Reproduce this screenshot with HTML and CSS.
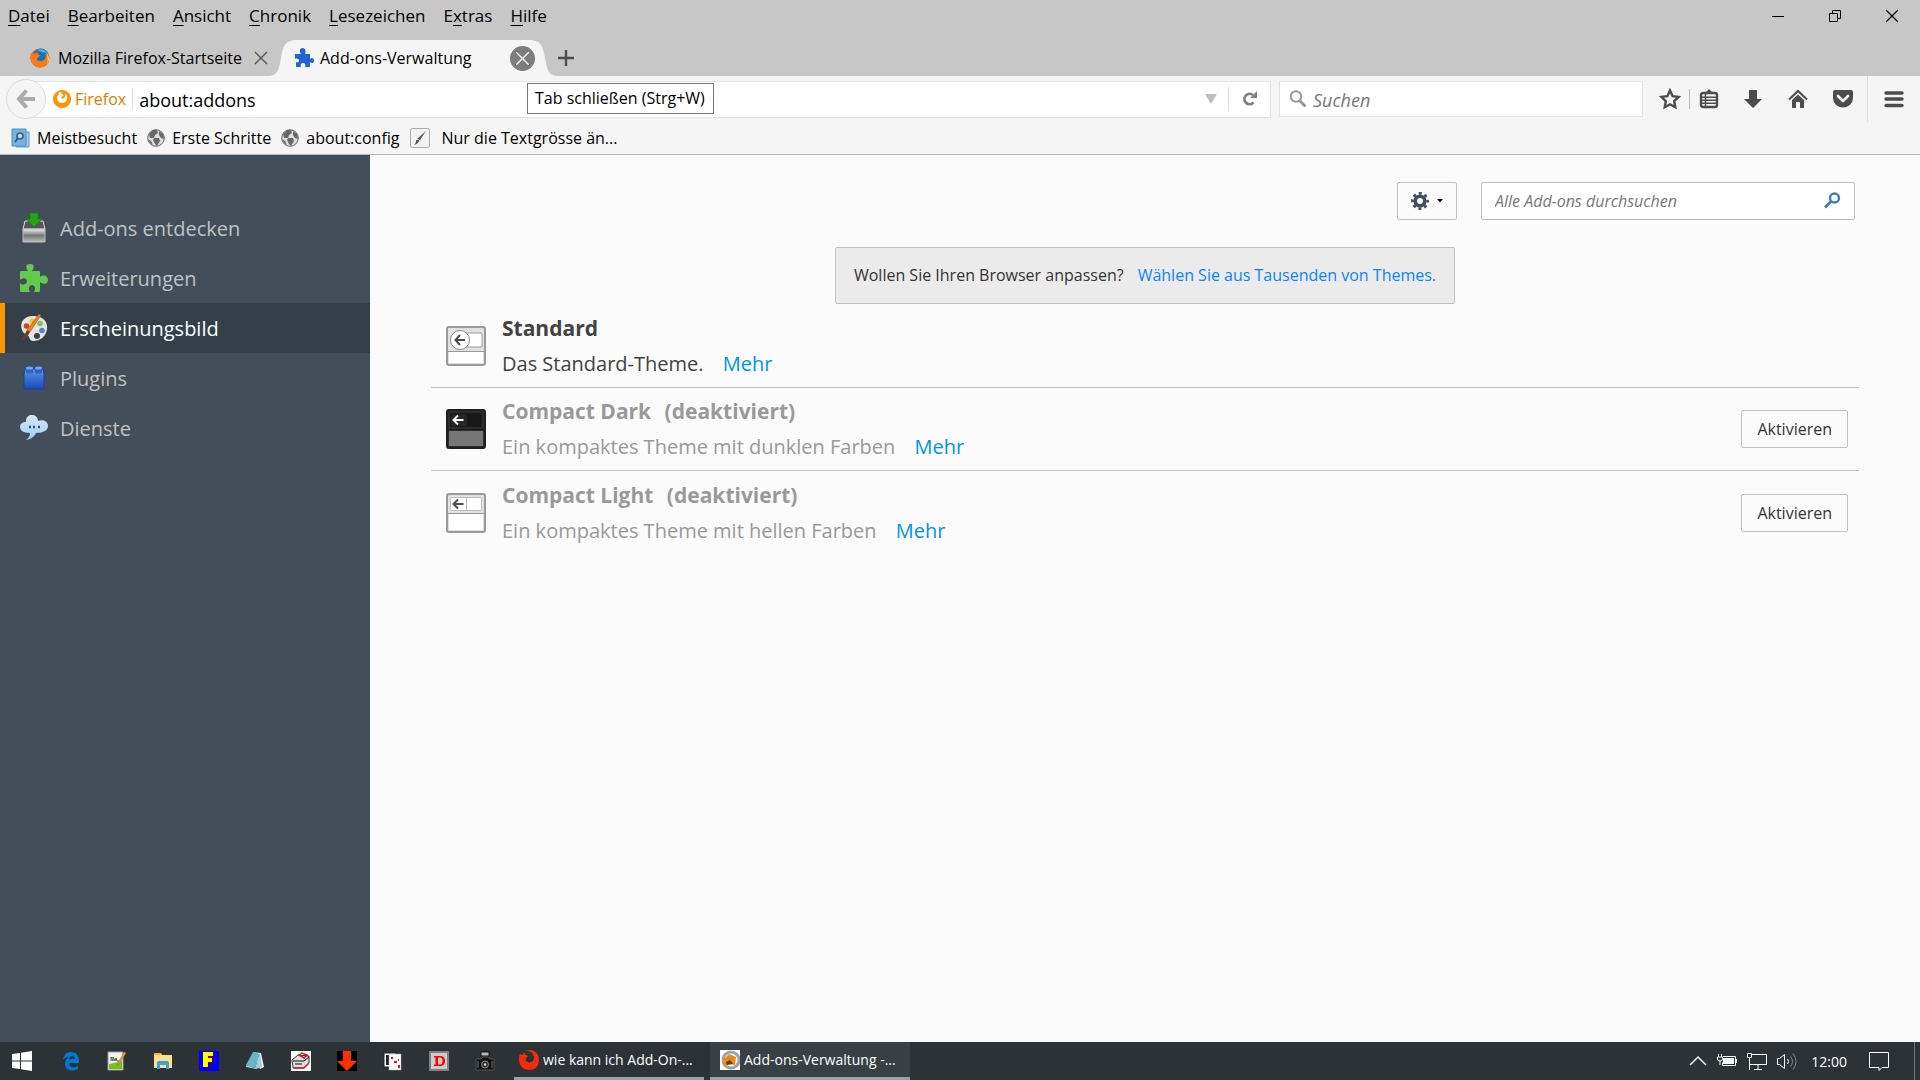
FILE: index.html
```html
<!DOCTYPE html>
<html lang="de">

<head>
    <meta charset="UTF-8">
    <meta name="viewport" content="width=device-width, initial-scale=1.0">
    <title>Add-ons-Verwaltung</title>
    <link rel="stylesheet" href="styles.css">
</head>

<body>

    <header class="titlebar">
        <nav class="menu">
            <button type="button"><u>D</u>atei</button>
            <button type="button"><u>B</u>earbeiten</button>
            <button type="button"><u>A</u>nsicht</button>
            <button type="button"><u>C</u>hronik</button>
            <button type="button"><u>L</u>esezeichen</button>
            <button type="button">E<u>x</u>tras</button>
            <button type="button"><u>H</u>ilfe</button>
        </nav>
        <div class="window-controls">
            <button type="button" aria-label="Minimieren"><svg width="14" height="14" viewBox="0 0 14 14"><path d="M1 7.500h12" stroke="#000"/></svg></button>
            <button type="button" aria-label="Verkleinern"><svg width="14" height="14" viewBox="0 0 14 14" fill="none" stroke="#000"><path d="M1.500 4.500h8v8h-8zM4.500 4.500v-3h8v8h-3"/></svg></button>
            <button type="button" aria-label="Schließen"><svg width="14" height="14" viewBox="0 0 14 14"><path d="M1 1l12 12M13 1L1 13" stroke="#000" stroke-width="1.200"/></svg></button>
        </div>
    </header>

    <div class="tabs">
        <div class="tab">
            <svg width="20" height="20" viewBox="0 0 20 20">
                <circle cx="10" cy="10" r="9.500" fill="#e66000"/>
                <circle cx="11" cy="8" r="7.500" fill="#1c6fb8"/>
                <path d="M7 2c3-2 8-1 10 3-3-1-4 0-6-1z" fill="#36b5e8"/>
                <path d="M1 5c1 1 2 0 4 1 1-1 2-2 3-2-1 2 0 3 2 3 0 2-3 2-3 4 1 3 6 3 8 0 1-2 1-4 0-6 5 4 5 9 1 12-4 4-11 3-14-2C0 12 0 8 1 5z" fill="#f47b15"/>
                <path d="M16 4c4 4 4 9 1 12 1-3 1-6-1-12z" fill="#ffcb2e"/>
            </svg>
            <span class="tab-title">Mozilla Firefox-Startseite</span>
            <button type="button" class="tab-close" aria-label="Tab schließen"><svg width="14" height="14" viewBox="0 0 14 14"><path d="M1 1l12 12M13 1L1 13" stroke="#555" stroke-width="1.400"/></svg></button>
        </div>
        <div class="tab-active">
            <svg class="tab-cap cap-left" width="30" height="36" viewBox="0 0 30 36"><path d="M0 36C10 36 11 29 13 18 15 6 17 0 29 0h1v36z" fill="#f5f5f5"/></svg>
            <div class="tab-body">
                <svg width="20" height="20" viewBox="0 0 20 20"><path d="M1 6h6C5 3 6 0 8.500 0s4 3 2.500 6h5v5c2-2 4-1 4 1.500S18 16 16 14v5h-5c1-2 0-4-2-4s-3 2-2 4H2v-5c2 1 3 0 3-1.500S3 10 1 11z" fill="#2264d1"/></svg>
                <span class="tab-title">Add-ons-Verwaltung</span>
                <button type="button" class="tab-close hovered" aria-label="Tab schließen"><svg width="13" height="13" viewBox="0 0 13 13"><path d="M0 0l13 13M13 0L0 13" stroke="#fff" stroke-width="1.400"/></svg></button>
                <span class="tooltip" role="tooltip">Tab schließen (Strg+W)</span>
            </div>
            <svg class="tab-cap cap-right" width="30" height="36" viewBox="0 0 30 36"><path d="M30 36C20 36 19 29 17 18 15 6 13 0 1 0H0v36z" fill="#f5f5f5"/></svg>
        </div>
        <button type="button" class="new-tab" aria-label="Neuer Tab"><svg width="16" height="16" viewBox="0 0 16 16"><path d="M8 0v16M0 8h16" stroke="#4c4c4c" stroke-width="2.400"/></svg></button>
    </div>

    <div class="toolbar">
        <button type="button" class="back" aria-label="Zurück"><svg width="20" height="20" viewBox="0 0 20 20" fill="none" stroke="#ababab" stroke-width="4"><path d="M10.500 1.500L3 10l7.500 8.500M3 10h16"/></svg></button>
        <div class="urlbar">
            <svg width="18" height="18" viewBox="0 0 18 18"><path d="M9 0a9 9 0 1 0 .1 0zm-3 2c1 .5 2 .5 3 .5-1 1.500 0 2 1.500 2.500 0 1.500-2.500 1.500-2.500 3 1 1 3 1 4-1 .5-1.500.5-3 0-4 2 1.500 2.500 4 2 6-.5 3-3 4.500-6 4-2.500-.5-4-2.500-4-5 0-2 1-3 2-3.500-.5-1-.5-1.500 0-2.500z" fill="#ff9400" fill-rule="evenodd"/></svg>
            <span class="identity">Firefox</span>
            <input type="text" class="url" value="about:addons" aria-label="Adresse">
            <svg class="history" width="12" height="10" viewBox="0 0 12 10"><path d="M0 0h12L6 10z" fill="#bfbfbf"/></svg>
            <button type="button" class="reload" aria-label="Neu laden"><svg width="16" height="16" viewBox="0 0 16 16"><path d="M11.500 11.500A5.200 5.200 0 1 1 11 4" fill="none" stroke="#808080" stroke-width="2.800"/><path d="M15 0v7H8z" fill="#808080"/></svg></button>
        </div>
        <label class="searchbar">
            <svg width="18" height="18" viewBox="0 0 18 18" fill="none" stroke="#999"><circle cx="7" cy="6.500" r="5.200" stroke-width="2"/><path d="M10.500 10.500l6 6" stroke-width="3"/></svg>
            <input type="text" placeholder="Suchen" aria-label="Suchen">
        </label>
        <div class="bookmark-group">
            <button type="button" aria-label="Lesezeichen hinzufügen"><svg width="22" height="22" viewBox="0 0 22 22"><path d="M11 2.500l2.600 5.600 6 .8-4.400 4.200 1.100 6.200L11 16.300l-5.300 3 1.100-6.200L2.400 8.900l6-.8z" fill="none" stroke="#4c4c4c" stroke-width="2.400"/></svg></button>
            <button type="button" aria-label="Lesezeichen anzeigen"><svg width="20" height="20" viewBox="0 0 20 20"><path d="M7 3l3-3 3 3z" fill="#4c4c4c"/><rect x="2" y="4" width="16" height="14" rx="2" fill="none" stroke="#4c4c4c" stroke-width="2.400"/><path d="M2 8.200h16M2 11.200h16M2 14.300h16M6.500 4v14" stroke="#4c4c4c" stroke-width="1.500"/></svg></button>
        </div>
        <button type="button" class="tool" aria-label="Downloads"><svg width="20" height="20" viewBox="0 0 20 20"><path d="M6 1h8v9h5l-9 9-9-9h5z" fill="#4c4c4c"/></svg></button>
        <button type="button" class="tool" aria-label="Startseite"><svg width="20" height="20" viewBox="0 0 20 20"><path d="M1 10.500l9-8.500 9 8.500" fill="none" stroke="#4c4c4c" stroke-width="2"/><path d="M4 11l6-5.500 6 5.500v8h-4v-6H8v6H4z" fill="#4c4c4c"/></svg></button>
        <button type="button" class="tool" aria-label="Pocket"><svg width="20" height="20" viewBox="0 0 20 20"><path d="M2 1h16q2 0 2 2v6a10 9.500 0 0 1-20 0V3q0-2 2-2z" fill="#4c4c4c"/><path d="M5 7l5 5 5-5" fill="none" stroke="#f5f5f5" stroke-width="2.600" stroke-linecap="round" stroke-linejoin="round"/></svg></button>
        <button type="button" class="app-menu" aria-label="Menü öffnen"><svg width="20" height="18" viewBox="0 0 20 18"><path d="M2 3h16M2 9h16M2 15.500h16" stroke="#4c4c4c" stroke-width="3.400" stroke-linecap="round"/></svg></button>
    </div>

    <nav class="bookmarks">
        <a href="#"><svg width="19" height="20" viewBox="0 0 19 20"><path d="M5 4h13v15H5z" fill="#a9cbe6" stroke="#5f9ac9"/><path d="M1 1h14v17H1z" fill="#78b3dd" stroke="#4f8fc2"/><circle cx="9" cy="8" r="3" fill="#b9dcf3" stroke="#285e8c" stroke-width="1.600"/><path d="M7 10l-3 4" stroke="#285e8c" stroke-width="2"/></svg><span>Meistbesucht</span></a>
        <a href="#"><svg width="18" height="18" viewBox="0 0 18 18"><circle cx="9" cy="9" r="8.300" fill="#ddd" stroke="#666"/><path d="M2 5l4-4 4 0 1 3-3 2-1 3-4 0zM7 9l5 0 1 3-3 5-2-2-2-4zM12 2l4 3 1 5-3-1-2-3zM1 10l3 2 2 4-3-2z" fill="#686868"/></svg><span>Erste Schritte</span></a>
        <a href="#"><svg width="18" height="18" viewBox="0 0 18 18"><circle cx="9" cy="9" r="8.300" fill="#ddd" stroke="#666"/><path d="M2 5l4-4 4 0 1 3-3 2-1 3-4 0zM7 9l5 0 1 3-3 5-2-2-2-4zM12 2l4 3 1 5-3-1-2-3zM1 10l3 2 2 4-3-2z" fill="#686868"/></svg><span>about:config</span></a>
        <a href="#" class="pen"><svg width="20" height="20" viewBox="0 0 20 20"><rect x=".5" y=".5" width="19" height="19" rx="2" fill="#f2f2f2" stroke="#aaa"/><path d="M4 17c2-2 2-3 2-5h3c0 3-2 4-5 5zM7 11l9-8-6 9z" fill="#555"/></svg><span>Nur die Textgrösse än...</span></a>
    </nav>

    <div class="page">
        <aside class="categories">
            <a href="#" class="category">
                <svg width="28" height="32" viewBox="0 0 28 32"><defs><linearGradient id="box" x2="0" y2="1"><stop offset="0" stop-color="#eee"/><stop offset=".5" stop-color="#777"/><stop offset="1" stop-color="#bbb"/></linearGradient></defs><path d="M5 9h18l2 8H3z" fill="#555" stroke="#ddd"/><path d="M3 17h22v13H3z" fill="url(#box)" stroke="#bbb"/><path d="M10 1h8v6h4l-8 8-8-8h4z" fill="#25a319" stroke="#178010"/></svg>
                <span>Add-ons entdecken</span>
            </a>
            <a href="#" class="category">
                <svg width="28" height="28" viewBox="0 0 28 28"><path d="M0 8q0-1 1-1h7C5 3 6 0 10 0s5 3 2 7h7q1 0 1 1v5c4-3 8-1 8 3s-4 5-8 2v9q0 1-1 1h-5c2-3 1-7-2-7s-4 4-2 7H1q-1 0-1-1v-8c3 3 7 1 7-2s-4-4-7-1z" fill="#63c94f"/></svg>
                <span>Erweiterungen</span>
            </a>
            <a href="#" class="category selected">
                <svg width="28" height="28" viewBox="0 0 28 28"><path d="M2 16C-1 8 5 1 14 2c9 0 14 6 13 13-1 8-7 12-14 12-4 0-3-5-6-6-2-1-4-2-5-5z" fill="#e6e4e1"/><circle cx="6.500" cy="12" r="2.800" fill="#d9401f"/><circle cx="12" cy="7" r="2.600" fill="#f2c530"/><circle cx="20" cy="9.500" r="2.800" fill="#7cc06b"/><circle cx="22" cy="16.500" r="2.800" fill="#4b83d8"/><circle cx="17" cy="22" r="3" fill="#39434b"/><path d="M19 0l2 1-11 17-3-2z" fill="#f08126" stroke="#a34d10" stroke-width=".6"/><path d="M7 16l3 2-3 5-6 4z" fill="#6b4225"/></svg>
                <span>Erscheinungsbild</span>
            </a>
            <a href="#" class="category">
                <svg width="28" height="28" viewBox="0 0 28 28"><defs><linearGradient id="brick" x2="0" y2="1"><stop offset="0" stop-color="#5b95e8"/><stop offset="1" stop-color="#1848bd"/></linearGradient></defs><path d="M5 5h18l1 5v15H4V10z" fill="url(#brick)" stroke="#1a429c"/><path d="M6 4c0-2 7-2 7 0v4c0 2-7 2-7 0zM15 4c0-2 7-2 7 0v4c0 2-7 2-7 0z" fill="#2e62c5"/><ellipse cx="9.500" cy="4" rx="3.500" ry="1.500" fill="#70a7ef"/><ellipse cx="18.500" cy="4" rx="3.500" ry="1.500" fill="#70a7ef"/></svg>
                <span>Plugins</span>
            </a>
            <a href="#" class="category">
                <svg width="28" height="28" viewBox="0 0 28 28"><defs><linearGradient id="cloud" x2="0" y2="1"><stop offset="0" stop-color="#dce3ff"/><stop offset="1" stop-color="#9cd0f2"/></linearGradient></defs><path d="M6 8C5-1 18-1 18 7c6-2 10 1 10 5s-4 7-12 7c-2 4-5 6-10 7 2-2 4-3 4-7-7 0-10-3-10-6s2-5 6-5z" fill="url(#cloud)"/><path d="M9 13h2M13 13h2M18 13h2" stroke="#23538a" stroke-width="2.600"/></svg>
                <span>Dienste</span>
            </a>
        </aside>

        <main class="content">
            <div class="content-header">
                <button type="button" class="utils" aria-label="Werkzeuge">
                    <svg width="18" height="18" viewBox="0 0 18 18" fill="none" stroke="#424f5a"><circle cx="9" cy="9" r="4.800" stroke-width="3.600"/><circle cx="9" cy="9" r="7.600" stroke-width="2.600" stroke-dasharray="3 2.970" stroke-dashoffset="1.500"/></svg>
                    <svg width="6" height="4" viewBox="0 0 6 4"><path d="M0 0h6L3 3.500z"/></svg>
                </button>
                <label class="addon-search">
                    <input type="text" placeholder="Alle Add-ons durchsuchen" aria-label="Alle Add-ons durchsuchen">
                    <svg width="18" height="18" viewBox="0 0 18 18" fill="none" stroke="#3f7db8"><circle cx="11.500" cy="6" r="4.500" stroke-width="2.400"/><path d="M8 9.500l-6 6" stroke-width="2.800"/></svg>
                </label>
            </div>

            <div class="banner">
                <span>Wollen Sie Ihren Browser anpassen?</span>
                <a href="#">Wählen Sie aus Tausenden von Themes.</a>
            </div>

            <ul class="addons">
                <li class="addon">
                    <svg width="40" height="40" viewBox="0 0 40 40"><rect x="1" y="1" width="38" height="38" rx="2" fill="#e1e1e1" stroke="#999" stroke-width="2"/><path d="M3 26h34v11H3z" fill="#fff"/><path d="M2 25.500h36" stroke="#999"/><rect x="18" y="7" width="18" height="14" rx="1" fill="#fff" stroke="#999"/><circle cx="14" cy="14" r="9.500" fill="#fff" stroke="#888"/><path d="M14 9l-4.500 5 4.500 5M10 14h9" fill="none" stroke="#4c4c4c" stroke-width="2"/></svg>
                    <div class="info">
                        <h2>Standard</h2>
                        <p>Das Standard-Theme. <a href="#">Mehr</a></p>
                    </div>
                </li>
                <li class="addon disabled">
                    <svg width="40" height="40" viewBox="0 0 40 40"><rect x="1" y="1" width="38" height="38" rx="2" fill="#2d2d2d" stroke="#1f1f1f" stroke-width="2"/><path d="M3 22h34v15H3z" fill="#757575"/><path d="M2 20.500h36" stroke="#161616"/><rect x="4" y="4" width="32" height="14" rx="1" fill="#181818"/><path d="M5 5h16v12H5z" fill="#262626"/><path d="M12 6.500L7.500 11l4.500 4.500M8 11h9.500" fill="none" stroke="#fff" stroke-width="2"/></svg>
                    <div class="info">
                        <h2>Compact Dark <span>(deaktiviert)</span></h2>
                        <p>Ein kompaktes Theme mit dunklen Farben <a href="#">Mehr</a></p>
                    </div>
                    <button type="button">Aktivieren</button>
                </li>
                <li class="addon disabled">
                    <svg width="40" height="40" viewBox="0 0 40 40"><rect x="1" y="1" width="38" height="38" rx="2" fill="#e1e1e1" stroke="#999" stroke-width="2"/><path d="M3 21h34v16H3z" fill="#fff"/><path d="M2 20.500h36" stroke="#999"/><rect x="4.500" y="4.500" width="31" height="13" rx="1" fill="#fff" stroke="#bbb"/><path d="M20.500 5v12" stroke="#bbb"/><path d="M12 6.500L7.500 11l4.500 4.500M8 11h9.500" fill="none" stroke="#4c4c4c" stroke-width="2"/></svg>
                    <div class="info">
                        <h2>Compact Light <span>(deaktiviert)</span></h2>
                        <p>Ein kompaktes Theme mit hellen Farben <a href="#">Mehr</a></p>
                    </div>
                    <button type="button">Aktivieren</button>
                </li>
            </ul>
        </main>
    </div>

    <footer class="taskbar">
        <div class="launchers">
            <button type="button" class="start" aria-label="Start"><svg width="20" height="20" viewBox="0 0 20 20" fill="#fff"><path d="M0 3l8-1v7.500H0zM9 1.800L20 0v9.500H9zM0 10.500h8V18l-8-1zM9 10.500h11V20L9 18.200z"/></svg></button>
            <button type="button" aria-label="Edge"><svg width="20" height="20" viewBox="0 0 20 20"><path d="M2 9C3 3 6 1 10 1c5 0 8 4 8 8v3H8c0 5 6 5 9 3v3c-6 3-13 1-13-5 0-3 1-5 4-7-3 0-5 1-6 3zm6-1h6c0-4-5-4-6 0z" fill="#0078d7" fill-rule="evenodd"/></svg></button>
            <button type="button" aria-label="Notepad++"><svg width="20" height="20" viewBox="0 0 20 20"><path d="M1 1h15v18H1z" fill="#f2f2ea" stroke="#999"/><path d="M2 13l13-3v8H2z" fill="#79bf20"/><path d="M4 10V6l2 4V6l2 4 1-3 1 3h3" fill="none" stroke="#555"/><path d="M17 1l2 1-7 11-2 1z" fill="#e8a33e" stroke="#a66a1d" stroke-width=".5"/></svg></button>
            <button type="button" aria-label="Explorer"><svg width="20" height="20" viewBox="0 0 20 20"><path d="M1 2h7l1 2h10v13H1z" fill="#ffe08a"/><path d="M1 2h7l1 2H1z" fill="#e9b63c"/><path d="M4 18v-6q0-2 2-2h8q2 0 2 2v6h-3v-4H7v4z" fill="#35a3e0"/></svg></button>
            <button type="button" aria-label="F"><svg width="20" height="20" viewBox="0 0 20 20"><path d="M0 0h20v20H0z" fill="#00f"/><path d="M6 3h9v4h-5v2h4v3h-4v5H6z" fill="#700"/><path d="M4 1h10v4H9v2h4v4H9v5H4z" fill="#ff0"/></svg></button>
            <button type="button" aria-label="Editor"><svg width="20" height="20" viewBox="0 0 20 20"><path d="M8 1l8 1 3 14-4 2z" fill="#e8f2f4"/><path d="M8 1l7 2-5 14-9-3z" fill="#68b5c6"/><path d="M1 14l9 3 5-14 2 13-6 2-10-2z" fill="#a5ccd6"/></svg></button>
            <button type="button" aria-label="Scanner"><svg width="20" height="20" viewBox="0 0 20 20"><path d="M0 0h20v20H0z" fill="#fff"/><path d="M1 9l6-5 11 1v7l-5 5H2z" fill="#ddd" stroke="#333"/><path d="M3 17h10l5-5M8 4l3-2 5 2-3 3z" fill="none" stroke="#d01c2b" stroke-width="1.500"/><path d="M2 10h11l5-4M4 13h7" fill="none" stroke="#111"/></svg></button>
            <button type="button" aria-label="Download"><svg width="20" height="20" viewBox="0 0 20 20"><path d="M0 0h20v20H0z"/><path d="M6 0h8v10h6L10 20 0 10h6z" fill="#ff3000"/></svg></button>
            <button type="button" aria-label="Solitaire"><svg width="20" height="20" viewBox="0 0 20 20"><path d="M1 2h12v14H1z" fill="#fff" stroke="#222"/><path d="M3 4h3v10H3z" fill="#222"/><path d="M6 3h12v16H6z" fill="#fff" stroke="#aaa" stroke-width=".5"/><path d="M8 6h2v2H8zM11 10h3v2h-3zM15 14h2v3h-2zM15 8h1v2h-1z" fill="#e81123"/></svg></button>
            <button type="button" aria-label="D"><svg width="20" height="20" viewBox="0 0 20 20"><path d="M1 1h18v18H1z" fill="#ccc" stroke="#808080" stroke-width="2"/><path d="M5 5h6q5 0 5 5t-5 5H5v-1.500h1.500v-7H5zm4 1.500v7h2q2.500 0 2.500-3.500T11 6.500z" fill="#f00" fill-rule="evenodd"/></svg></button>
            <button type="button" aria-label="Kamera"><svg width="20" height="20" viewBox="0 0 20 20"><path d="M6 1h8v4H6z" fill="#bbb" stroke="#111"/><path d="M1 8h5l2-2h5l2 2h4v11H1z" fill="#111" stroke="#555"/><circle cx="10" cy="13.500" r="3.500" fill="#333" stroke="#888"/><circle cx="10" cy="13.500" r="1.200" fill="#ddd"/><path d="M3 10v7M17 10v7" stroke="#777"/></svg></button>
        </div>
        <button type="button" class="task"><svg width="20" height="20" viewBox="0 0 20 20"><path d="M1 4l2 1 3-3c-1 3 1 3 3 4-1 2-3 2-2 5 3 3 8 1 8-3 0-2-1-4-3-6C8 0 7 1 6 1c8-3 14 2 14 9s-5 10-10 10S0 16 0 10c0-2 0-4 1-6z" fill="#f22d0c"/></svg><span>wie kann ich Add-On-...</span></button>
        <button type="button" class="task current"><svg width="20" height="20" viewBox="0 0 20 20"><path d="M0 0h20v20H0z" fill="#fff"/><circle cx="11" cy="10" r="8" fill="none" stroke="#99a3b5" stroke-width="3"/><path d="M1 7l4 1 4-4 7 3-1 8-5-1-6 2-2-4 3-1z" fill="#e88a14"/><path d="M6 12l4-2 3 4-6 1z" fill="#663c0d"/></svg><span>Add-ons-Verwaltung -...</span></button>
        <div class="tray">
            <svg width="18" height="20" viewBox="0 0 18 20"><path d="M1 14l8-8 8 8" fill="none" stroke="#fff" stroke-width="1.500"/></svg>
            <svg width="20" height="20" viewBox="0 0 20 20"><path d="M6 5.500h12.500v9H5.500v-3" fill="none" stroke="#fff"/><path d="M6 7h11v6H6zM19 8h1v4h-1z" fill="#fff"/><path d="M1.500 3v3M4.500 3v3M.5 6v2q0 2 2.500 2t2.500-2V6zM3 10v4" fill="none" stroke="#fff"/></svg>
            <svg width="20" height="20" viewBox="0 0 20 20" fill="none" stroke="#fff"><path d="M5 3.500h14.500v10H3M11 14v4M7 18.500h8M.5 2.500h4v4h-4zM2.500 7v12"/></svg>
            <svg width="20" height="20" viewBox="0 0 20 20" fill="none" stroke="#fff"><path d="M.5 7.500h2l5-4v14l-5-4h-2zM10.500 8q2 2.500 0 5"/><path d="M13.500 5.500q4 5 0 10M16 2.500q6 8 0 16" stroke="#888"/></svg>
            <time>12:00</time>
            <svg class="notifications" width="20" height="20" viewBox="0 0 20 20"><path d="M.5 1.500h19v15H13l-3 3v-3H.5z" fill="none" stroke="#fff"/></svg>
        </div>
    </footer>

</body>

</html>
```
FILE: styles.css
```css
* {
    box-sizing: border-box;
}

body {
    font-family: 'Open Sans', 'Noto Sans', sans-serif;
    font-size: 16px;
    margin: 0;
    height: 100vh;
    display: flex;
    flex-direction: column;
    overflow: hidden;
    background-color: #fbfbfb;
    color: #000;
}

svg {
    display: block;
    flex-shrink: 0;
}

a {
    text-decoration: none;
}

button,
input {
    font: inherit;
    color: inherit;
    margin: 0;
    padding: 0;
    border: none;
    background: none;
    outline: none;
}

button {
    display: flex;
    align-items: center;
    justify-content: center;
    white-space: nowrap;
}

/* menu bar */

.titlebar {
    display: flex;
    justify-content: space-between;
    height: 32px;
    background-color: #c7c7c7;
}

.menu {
    display: flex;
    gap: 18px;
    padding: 0 0 2px 8px;
    font-size: 17px;
}

.menu button {
    display: block;
}

.menu u {
    text-underline-offset: 3px;
    text-decoration-thickness: 1px;
}

.window-controls {
    display: flex;
}

.window-controls button {
    width: 57px;
}

/* tabs */

.tabs {
    display: flex;
    align-items: flex-end;
    height: 44px;
    padding-left: 30px;
    background-color: #c7c7c7;
}

.tab {
    display: flex;
    align-items: center;
    gap: 8px;
    width: 238px;
    height: 36px;
}

.tab-title {
    flex: 1;
    white-space: nowrap;
}

.tab-active {
    display: flex;
    height: 36px;
}

.tab-body {
    position: relative;
    display: flex;
    align-items: center;
    gap: 6px;
    width: 235px;
    background-color: #f5f5f5;
}

.cap-left {
    margin-right: -4px;
}

.cap-right {
    margin-left: -1px;
}

.tab-close.hovered {
    width: 25px;
    height: 25px;
    margin-right: -6px;
    border-radius: 50%;
    background-color: #7d7d7d;
    z-index: 1;
}

.tooltip {
    position: absolute;
    left: 233px;
    top: 43px;
    z-index: 2;
    padding: 3px 8px 3px 7px;
    border: 1px solid #767676;
    background-color: #fff;
    line-height: 23px;
    white-space: nowrap;
}

.new-tab {
    height: 36px;
}

/* navigation */

.toolbar {
    display: flex;
    align-items: center;
    height: 46px;
    padding-left: 6px;
    background-color: #f5f5f5;
}

.back {
    width: 40px;
    height: 40px;
    margin-right: -12px;
    border: 1px solid #dcdcdc;
    border-radius: 50%;
    background-color: #f5f5f5;
    z-index: 1;
}

.urlbar {
    flex: 1;
    display: flex;
    align-items: center;
    height: 37px;
    padding-left: 18px;
    border: 1px solid #e3e3e3;
    background-color: #fff;
}

.identity {
    margin-left: 4px;
    padding-right: 6px;
    border-right: 1px solid #ddd;
    color: #e07a00;
}

.url {
    flex: 1;
    padding: 2px 0 0 6px;
    font-size: 18px;
}

.history {
    margin-right: 11px;
}

.reload {
    width: 42px;
    height: 24px;
    border-left: 1px solid #ddd;
}

.searchbar {
    display: flex;
    align-items: center;
    gap: 6px;
    width: 364px;
    height: 36px;
    margin: 0 8px;
    padding-left: 9px;
    border: 1px solid #e3e3e3;
    background-color: #fff;
}

.searchbar input {
    flex: 1;
    padding-top: 2px;
    font-size: 18px;
}

input::placeholder {
    color: #777;
    font-style: italic;
    opacity: 1;
}

.bookmark-group {
    display: flex;
    margin-right: 3px;
}

.bookmark-group button {
    width: 38px;
    height: 20px;
}

.bookmark-group button + button {
    border-left: 1px solid #bbb;
}

.tool {
    width: 45px;
}

.app-menu {
    width: 53px;
    height: 46px;
    margin-left: 2px;
    border-left: 1px solid #ddd;
}

.bookmarks {
    display: flex;
    align-items: center;
    gap: 10px;
    height: 33px;
    padding-left: 11px;
    border-bottom: 1px solid #b9b9b9;
    background-color: #f5f5f5;
}

.bookmarks a {
    display: flex;
    align-items: center;
    gap: 7px;
    color: #000;
}

.bookmarks .pen {
    gap: 12px;
}

/* add-ons page */

.page {
    flex: 1;
    display: flex;
    min-height: 0;
}

.categories {
    width: 370px;
    padding-top: 48px;
    background-color: #424f5a;
}

.category {
    display: flex;
    align-items: center;
    gap: 12px;
    height: 50px;
    padding-left: 15px;
    border-left: 5px solid transparent;
    font-size: 20px;
    color: #c1c1c1;
}

.category.selected {
    border-left-color: #ff9500;
    background-color: #343f48;
    color: #fff;
}

.content {
    flex: 1;
    padding: 27px 61px 0;
}

.content-header {
    display: flex;
    justify-content: flex-end;
    gap: 24px;
    padding-right: 4px;
}

.utils,
.addon-search,
.addon button {
    height: 38px;
    border: 1px solid #c1c1c1;
    border-radius: 2px;
}

.utils {
    gap: 8px;
    width: 60px;
}

.addon-search {
    display: flex;
    align-items: center;
    width: 374px;
    padding: 0 13px;
    background-color: #fff;
}

.addon-search input {
    flex: 1;
}

.banner {
    display: flex;
    gap: 14px;
    width: fit-content;
    margin: 27px auto 1px;
    padding: 16px 18px;
    border: 1px solid #c1c1c1;
    border-radius: 2px;
    background-color: #ebebeb;
    line-height: 23px;
    color: #333;
}

.banner a {
    color: #0a84ff;
}

.addons {
    list-style: none;
    margin: 0;
    padding: 0;
}

.addon {
    display: flex;
    align-items: center;
    gap: 16px;
    height: 83px;
    padding: 0 11px 0 15px;
    border-bottom: 1px solid #c1c1c1;
    color: #424242;
}

.addon:last-child {
    border-bottom: none;
}

.addon.disabled {
    color: #999;
}

.info {
    flex: 1;
}

.info h2,
.info p {
    margin: 0;
    font-size: 20px;
    line-height: 35px;
}

.info h2 {
    font-size: 21px;
}

.info span {
    margin-left: 8px;
}

.info a {
    margin-left: 14px;
    color: #0095dd;
}

.addon button {
    padding: 0 15px;
    color: #333;
}

/* taskbar */

.taskbar {
    display: flex;
    height: 38px;
    background-color: #2d3236;
    color: #fff;
    font-size: 14px;
}

.launchers {
    display: flex;
    margin-right: 6px;
}

.launchers button {
    width: 46px;
}

.launchers .start {
    width: 44px;
    margin-right: 4px;
}

.task {
    justify-content: flex-start;
    gap: 4px;
    width: 190px;
    margin-right: 6px;
    padding-left: 5px;
    border-bottom: 3px solid #93a4b0;
}

.task.current {
    width: 200px;
    padding-left: 10px;
    background-color: #384044;
}

.tray {
    display: flex;
    align-items: center;
    gap: 10px;
    margin-left: auto;
    margin-right: 5px;
    padding-right: 25px;
    border-right: 1px solid #777;
}

.tray time {
    padding: 0 12px 0 4px;
}
```
